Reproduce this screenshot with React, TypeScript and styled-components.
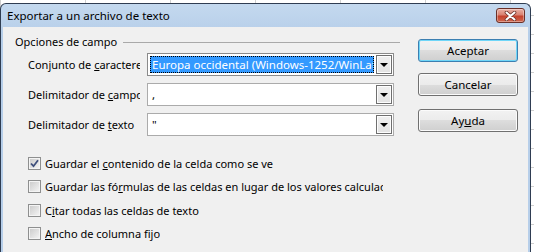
import styled, { createGlobalStyle } from 'styled-components'

const GlobalStyle = createGlobalStyle`
	html, body {
		margin: 0;
		padding: 0;
	}
	body {
		font-family: "Noto Sans", "Open Sans", sans-serif;
		font-size: 11px;
		color: #000;
	}
`

const FIELDS = [
	{ before: 'Conjunto de ', mark: 'c', after: 'aracteres', value: 'Europa occidental (Windows-1252/WinLatin 1)', focused: true },
	{ before: 'Delimitador de ', mark: 'c', after: 'ampo', value: ',', focused: false },
	{ before: 'Delimitador de ', mark: 't', after: 'exto', value: '"', focused: false },
]

const OPTIONS = [
	{ before: 'Guardar el ', mark: 'c', after: 'ontenido de la celda como se ve', checked: true },
	{ before: 'Guardar las fó', mark: 'r', after: 'mulas de las celdas en lugar de los valores calculados', checked: false },
	{ before: 'C', mark: 'i', after: 'tar todas las celdas de texto', checked: false },
	{ before: '', mark: 'A', after: 'ncho de columna fijo', checked: false },
]

const Mnemonic = ({ before, mark, after }: { before: string; mark: string; after: string }) => (
	<>
		{before}
		<U>{mark}</U>
		{after}
	</>
)

export default function App() {
	return (
		<>
			<GlobalStyle />
			<Sheet>
				<Window>
					<TitleBar>
						<Title>Exportar a un archivo de texto</Title>
						<CloseButton aria-label="Cerrar">
							<svg width="13" height="10" viewBox="0 0 13 10">
								<path d="M2.5 1.5 L10.5 8.5 M10.5 1.5 L2.5 8.5" stroke="#6a3027" strokeWidth="3.6" strokeLinecap="round" />
								<path d="M2.5 1.5 L10.5 8.5 M10.5 1.5 L2.5 8.5" stroke="#fff" strokeWidth="2" strokeLinecap="round" />
							</svg>
						</CloseButton>
					</TitleBar>
					<Body>
						<Options>
							<GroupHeader>
								<GroupTitle>Opciones de campo</GroupTitle>
								<GroupLine />
							</GroupHeader>
							<Fields>
								{FIELDS.map((f) => (
									<FieldRow key={f.before + f.after}>
										<FieldLabel>
											<Mnemonic before={f.before} mark={f.mark} after={f.after} />
										</FieldLabel>
										<Combo $focused={f.focused}>
											<ComboValue $focused={f.focused}>{f.value}</ComboValue>
											<DropButton>
												<Arrow />
											</DropButton>
										</Combo>
									</FieldRow>
								))}
							</Fields>
							<Checks>
								{OPTIONS.map((o) => (
									<CheckRow key={o.after}>
										<CheckBox>
											{o.checked && (
												<svg width="9" height="9" viewBox="0 0 9 9">
													<path d="M1 4.5 L3.5 7.2 L8 1.2" fill="none" stroke="#3e4f7c" strokeWidth="1.8" />
												</svg>
											)}
										</CheckBox>
										<CheckText>
											<Mnemonic before={o.before} mark={o.mark} after={o.after} />
										</CheckText>
									</CheckRow>
								))}
							</Checks>
						</Options>
						<Buttons>
							<PushButton $default>Aceptar</PushButton>
							<PushButton>Cancelar</PushButton>
							<PushButton $gap={13}>
								Ay<U>u</U>da
							</PushButton>
						</Buttons>
					</Body>
				</Window>
			</Sheet>
		</>
	)
}

const Sheet = styled.div`
	width: 534px;
	height: 252px;
	overflow: hidden;
	box-sizing: border-box;
	padding-top: 3px;
	background-color: #fff;
	background-image: linear-gradient(to right, #d0d0d0 1px, transparent 1px),
		linear-gradient(to bottom, #d0d0d0 1px, transparent 1px);
	background-size: 85px 100%, 100% 19px;
	background-position: 0 0, 0 15px;
`

const Window = styled.div`
	width: 531px;
	height: 260px;
	box-sizing: border-box;
	border: 1px solid #2f3d52;
	border-bottom: none;
	border-radius: 6px 6px 0 0;
	padding: 0 2px;
	background: linear-gradient(#c4d9ef, #b6cee9 30px, #b6cee9);
	display: flex;
	flex-direction: column;
`

const TitleBar = styled.div`
	height: 23px;
	display: flex;
	align-items: flex-start;
	padding-left: 4px;
`

const Title = styled.div`
	line-height: 23px;
	font-size: 11.5px;
	color: #000;
`

const CloseButton = styled.div`
	margin-left: auto;
	margin-right: 3px;
	margin-top: 4px;
	width: 29px;
	height: 15px;
	box-sizing: border-box;
	border: 1px solid #6b3129;
	border-radius: 3px;
	background: linear-gradient(#eab1a5, #d98170 45%, #c4412c 55%, #d0674f);
	box-shadow: inset 0 0 0 1px rgba(255, 255, 255, 0.35);
	display: flex;
	align-items: center;
	justify-content: center;
`

const Body = styled.div`
	flex: 1;
	background: #f0f0f0;
	display: flex;
	padding: 7px 0 0 12px;
`

const Options = styled.div`
	width: 385px;
	display: flex;
	flex-direction: column;
`

const GroupHeader = styled.div`
	display: flex;
	align-items: center;
	gap: 6px;
	height: 16px;
`

const GroupTitle = styled.span`
	line-height: 16px;
	white-space: nowrap;
`

const GroupLine = styled.div`
	flex: 1;
	height: 1px;
	background: #a9a9a9;
`

const Fields = styled.div`
	display: flex;
	flex-direction: column;
	gap: 7px;
	margin-top: 3px;
	padding-left: 13px;
`

const FieldRow = styled.div`
	display: flex;
	align-items: center;
	height: 23px;
`

const FieldLabel = styled.div`
	width: 112px;
	margin-right: 7px;
	overflow: hidden;
	white-space: nowrap;
`

const Combo = styled.div<{ $focused?: boolean }>`
	width: 247px;
	height: 23px;
	box-sizing: border-box;
	border: 1px solid ${(p) => (p.$focused ? '#8a8a8a' : '#ababab')};
	background: #fff;
	display: flex;
	align-items: stretch;
	padding: 1px 1px 1px 2px;
	gap: 2px;
`

const ComboValue = styled.div<{ $focused?: boolean }>`
	flex: 1;
	min-width: 0;
	margin: 1px 0;
	box-sizing: border-box;
	padding-left: 1px;
	overflow: hidden;
	white-space: nowrap;
	display: flex;
	align-items: center;
	font-size: 11.5px;
	background: ${(p) => (p.$focused ? '#3399ff' : 'transparent')};
	color: ${(p) => (p.$focused ? '#fff' : '#000')};
	border: 1px dotted ${(p) => (p.$focused ? '#000' : 'transparent')};
`

const DropButton = styled.div`
	width: 16px;
	box-sizing: border-box;
	border: 1px solid #6f6f6f;
	box-shadow: inset 0 0 0 1px #fdfdfd;
	background: linear-gradient(#f0f0f0, #e2e2e2);
	display: flex;
	align-items: center;
	justify-content: center;
`

const Arrow = styled.div`
	width: 0;
	height: 0;
	border-left: 4px solid transparent;
	border-right: 4px solid transparent;
	border-top: 4px solid #000;
	margin-top: 1px;
`

const Checks = styled.div`
	display: flex;
	flex-direction: column;
	margin-top: 16px;
	padding-left: 13px;
`

const CheckRow = styled.div`
	display: flex;
	align-items: center;
	height: 23.3px;
	gap: 4px;
`

const CheckBox = styled.div`
	width: 13px;
	height: 13px;
	flex: none;
	box-sizing: border-box;
	border: 1px solid #8e8f8f;
	box-shadow: inset 0 0 0 1px #f4f4f4;
	background: linear-gradient(135deg, #c9c9c9, #f6f6f6);
	display: flex;
	align-items: center;
	justify-content: center;
`

const CheckText = styled.span`
	white-space: nowrap;
	overflow: hidden;
	max-width: 338px;
`

const Buttons = styled.div`
	display: flex;
	flex-direction: column;
	margin-left: 18px;
	margin-top: 5px;
`

const PushButton = styled.div<{ $default?: boolean; $gap?: number }>`
	width: 100px;
	height: 23px;
	box-sizing: border-box;
	margin-top: ${(p) => (p.$gap ?? 11)}px;
	&:first-child {
		margin-top: 0;
	}
	font-size: 11.5px;
	border: 1px solid ${(p) => (p.$default ? '#3c7fb1' : '#707070')};
	border-radius: 3px;
	background: linear-gradient(#f2f2f2, #ebebeb 50%, #dddddd 50%, #cfcfcf);
	box-shadow: inset 0 0 0 1px ${(p) => (p.$default ? '#6fd6f8' : '#fbfbfb')};
	display: flex;
	align-items: center;
	justify-content: center;
`

const U = styled.span`
	text-decoration: underline;
`
